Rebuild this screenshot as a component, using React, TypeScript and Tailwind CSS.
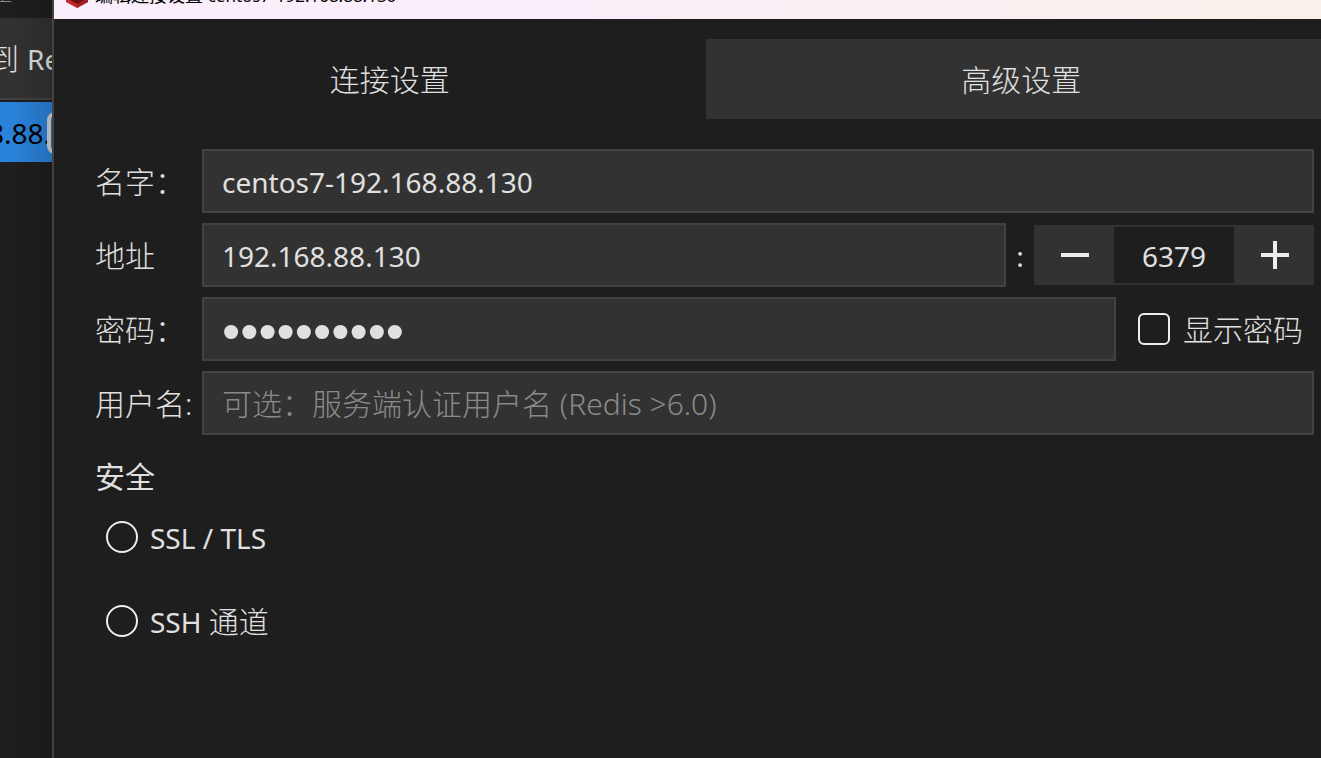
import type { ReactNode } from "react"

const FIELD =
  "h-16 w-full min-w-0 rounded-none border-2 border-[#424242] bg-[#323232] px-[18px] text-[#e0e0e0] outline-none placeholder:text-[#8a8a8a] placeholder:opacity-100"

interface RowProps {
  id: string
  label: string
  children: ReactNode
}

function Row({ id, label, children }: RowProps) {
  return (
    <div className="flex h-16 items-center">
      <label htmlFor={id} className="w-[107px] shrink-0 pt-[2px] text-[30px] leading-10 whitespace-nowrap">
        {label}
      </label>
      <div className="flex min-w-0 flex-1 items-center">{children}</div>
    </div>
  )
}

function Sidebar() {
  return (
    <aside className="relative w-[52px] shrink-0 overflow-hidden bg-[#1e1e1e]">
      <div className="flex h-[18px] items-end overflow-hidden">
        <span className="-ml-2 pb-[14px] text-[20px] leading-5 text-[#8a8a8a]">正</span>
      </div>
      <div className="flex h-[82px] items-center overflow-hidden border-b-2 border-[#424242] bg-[#323232] pt-[2px] whitespace-nowrap">
        <span className="-ml-[11px] text-[30px] leading-10">到</span>
        <span className="ml-2 text-[28px] leading-10 font-normal">Redis</span>
      </div>
      <div className="mt-[2px] flex h-[60px] items-center overflow-hidden bg-[#2a82da] pt-[2px] whitespace-nowrap text-black">
        <span className="-ml-3 text-[28px] leading-10 font-normal">8.88.</span>
        <span className="-ml-1 h-[42px] w-10 shrink-0 rounded-lg border-4 border-[#d0d0d0] bg-[#2a70b8]" />
      </div>
      <div className="absolute inset-y-0 right-0 w-10 bg-linear-to-r from-transparent to-black/15" />
    </aside>
  )
}

function Logo() {
  return (
    <svg viewBox="0 0 24 24" className="size-6 shrink-0" aria-hidden="true">
      <path d="M1 6 12 0l11 6v12l-11 6-11-6z" fill="#c62828" />
      <path d="M12 12 23 6v12l-11 6z" fill="#a31f22" />
      <path d="M5 8h14v8l-7 4-7-4z" fill="#6b1418" />
    </svg>
  )
}

export default function App() {
  return (
    <div className="flex h-screen overflow-hidden bg-[#1e1e1e] font-['Noto_Sans','Noto_Sans_CJK_SC',sans-serif] font-light text-[#e0e0e0]">
      <Sidebar />
      <main className="min-w-0 flex-1 overflow-hidden border-l-2 border-[#424242]">
        <header className="flex h-[19px] items-end overflow-hidden bg-linear-to-r from-[#f9eef9] from-40% to-[#faf0ea] pl-[11px] text-black">
          <div className="flex items-center gap-[6px] pb-[11px]">
            <Logo />
            <h1 className="text-[18px] leading-6 font-normal whitespace-nowrap">
              编辑连接设置 <span className="text-[17px]">centos7-192.168.88.130</span>
            </h1>
          </div>
        </header>

        <div role="tablist" className="mt-5 -mr-4 ml-5 flex h-20 text-[30px] leading-10">
          <button type="button" role="tab" aria-selected="true" className="flex-1 pt-[2px]">
            连接设置
          </button>
          <button type="button" role="tab" aria-selected="false" className="flex-1 bg-[#323232] pt-[2px]">
            高级设置
          </button>
        </div>

        <form className="mt-[30px] pr-[7px] pl-[41px]">
          <div className="flex flex-col gap-[10px]">
            <Row id="name" label="名字：">
              <input id="name" className={`${FIELD} pt-[2px] text-[28px] font-normal`} defaultValue="centos7-192.168.88.130" />
            </Row>
            <Row id="host" label="地址">
              <input id="host" className={`${FIELD} pt-[2px] text-[28px] font-normal`} defaultValue="192.168.88.130" />
              <span className="w-7 shrink-0 pt-[2px] text-center text-[28px] leading-10 font-normal">:</span>
              <div className="flex h-[60px] shrink-0 bg-[#323232]">
                <button type="button" aria-label="-" className="flex w-20 items-center justify-center pl-[2px]">
                  <svg viewBox="0 0 28 28" className="size-7">
                    <path d="M0 14h28" stroke="#eeeeee" strokeWidth="4" />
                  </svg>
                </button>
                <input
                  aria-label="端口"
                  className="w-[120px] rounded-none border-y-2 border-[#323232] bg-[#1e1e1e] pt-[2px] text-center text-[28px] font-normal outline-none"
                  defaultValue="6379"
                />
                <button type="button" aria-label="+" className="flex w-20 items-center justify-center pl-[2px]">
                  <svg viewBox="0 0 28 28" className="size-7">
                    <path d="M0 14h28M14 0v28" stroke="#eeeeee" strokeWidth="4" />
                  </svg>
                </button>
              </div>
            </Row>
            <Row id="password" label="密码：">
              {/* large size only scales the mask dots */}
              <input
                id="password"
                type="password"
                className={`${FIELD} pt-1 font-['Liberation_Sans',sans-serif] text-[52px] font-normal`}
                defaultValue="redis12345"
              />
              <label className="flex shrink-0 items-center gap-[13px] pr-[11px] pl-[22px] text-[30px] leading-10 whitespace-nowrap">
                <input type="checkbox" className="size-8 appearance-none rounded-md border-2 border-[#eeeeee]" />
                <span className="pt-[2px]">显示密码</span>
              </label>
            </Row>
            <Row id="username" label="用户名:">
              <input id="username" className={`${FIELD} text-[30px]`} placeholder="可选：服务端认证用户名 (Redis >6.0)" />
            </Row>
          </div>

          <fieldset className="mt-[22px]">
            <legend className="text-[30px] leading-10 font-normal">安全</legend>
            <div className="mt-5 flex flex-col gap-11 pl-[11px]">
              <label className="flex h-10 items-center gap-3 text-[28px] leading-10">
                <input type="radio" name="security" className="size-8 appearance-none rounded-full border-2 border-[#eeeeee]" />
                <span className="pt-[2px] font-normal">SSL / TLS</span>
              </label>
              <label className="flex h-10 items-center gap-3 text-[28px] leading-10">
                <input type="radio" name="security" className="size-8 appearance-none rounded-full border-2 border-[#eeeeee]" />
                <span className="pt-[2px] font-normal">
                  SSH <span className="text-[30px] font-light">通道</span>
                </span>
              </label>
            </div>
          </fieldset>
        </form>
      </main>
    </div>
  )
}
